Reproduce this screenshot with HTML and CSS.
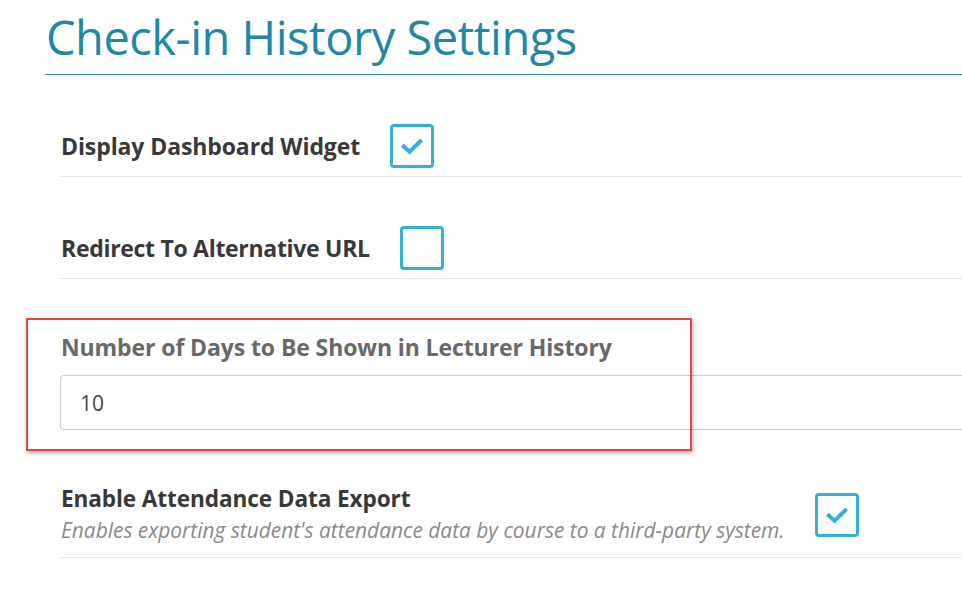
FILE: index.html
```html
<!DOCTYPE html>
<html>
<head>
<meta charset="utf-8">
<link rel="stylesheet" href="styles.css">
</head>
<body>
<div class="page">
  <h1 class="title">Check-in History Settings</h1>
  <div class="rows">
    <div class="row">
      <span class="label">Display Dashboard Widget</span>
      <span class="check"><svg viewBox="0 0 24 24" width="24" height="24"><path d="M3.8 12.6 L9.6 17.8 L20.2 7.4" fill="none" stroke="#31b0dc" stroke-width="4" stroke-linecap="square" stroke-linejoin="miter"/></svg></span>
    </div>
    <div class="row">
      <span class="label label-tight">Redirect To Alternative URL</span>
      <span class="check"></span>
    </div>
    <div class="group">
      <div class="group-label">Number of Days to Be Shown in Lecturer History</div>
      <div class="input">10</div>
      <div class="highlight"></div>
    </div>
    <div class="row row-desc">
      <div class="label-block">
        <div class="label">Enable Attendance Data Export</div>
        <div class="desc">Enables exporting student's attendance data by course to a third-party system.</div>
      </div>
      <span class="check"><svg viewBox="0 0 24 24" width="24" height="24"><path d="M3.8 12.6 L9.6 17.8 L20.2 7.4" fill="none" stroke="#31b0dc" stroke-width="4" stroke-linecap="square" stroke-linejoin="miter"/></svg></span>
    </div>
  </div>
</div>
</body>
</html>
```
FILE: styles.css
```css
html, body {
  margin: 0;
  padding: 0;
  background: #fff;
  overflow: hidden;
}
.page {
  padding-left: 45px;
  font-family: "Open Sans", "Liberation Sans", sans-serif;
}
.title {
  margin: 0;
  height: 75px;
  padding-top: 7px;
  padding-left: 1px;
  box-sizing: border-box;
  font-size: 47px;
  font-weight: 400;
  line-height: 60px;
  color: #1f87a7;
  border-bottom: 1px solid #1f87a7;
  letter-spacing: -0.5px;
}
.rows {
  padding-left: 15px;
}
.row {
  display: flex;
  align-items: center;
  gap: 30px;
  padding-top: 49px;
  padding-bottom: 8px;
  border-bottom: 1px solid #e8e8e8;
}
.label {
  font-size: 23px;
  font-weight: 700;
  line-height: 30px;
  color: #383838;
  padding-left: 1px;
  letter-spacing: -0.1px;
}
.label-tight {
  letter-spacing: -0.3px;
}
.check {
  width: 44px;
  height: 44px;
  flex: none;
  box-sizing: border-box;
  border: 3px solid #31b0dc;
  border-radius: 4px;
  display: flex;
  align-items: center;
  justify-content: center;
}
.group {
  position: relative;
  padding-top: 49px;
}
.group-label {
  font-size: 23px;
  font-weight: 700;
  color: #686868;
  line-height: 38px;
  padding-left: 1px;
  letter-spacing: -0.1px;
}
.input {
  margin-top: 9px;
  height: 55px;
  box-sizing: border-box;
  border: 1px solid #c8ccd2;
  border-right: none;
  border-radius: 4px 0 0 4px;
  padding-left: 19px;
  font-size: 21px;
  color: #444;
  display: flex;
  align-items: center;
}
.highlight {
  position: absolute;
  left: -34px;
  top: 39px;
  width: 666px;
  height: 133px;
  box-sizing: border-box;
  border: 2px solid #ea4444;
  box-shadow: 1px 2px 4px rgba(0,0,0,0.35);
}
.row-desc {
  padding-top: 55px;
  padding-bottom: 13px;
}
.label-block .label {
  line-height: 28px;
  font-size: 22.6px;
}
.desc {
  font-size: 20.9px;
  font-style: italic;
  color: #8a8a8a;
  line-height: 28px;
  margin-top: 3px;
  padding-left: 1px;
}
```
